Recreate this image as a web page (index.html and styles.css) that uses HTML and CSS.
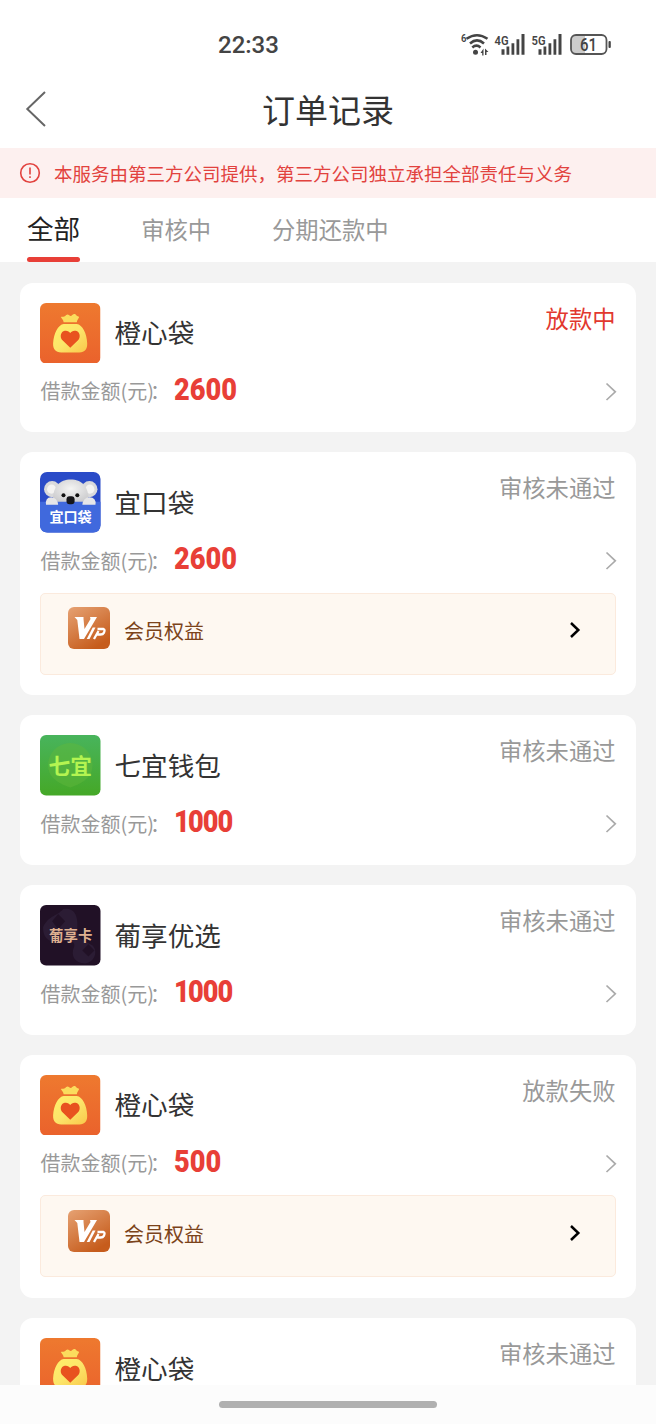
FILE: index.html
```html
<!DOCTYPE html>
<html lang="zh-CN">
<head>
  <meta charset="UTF-8">
  <meta name="viewport" content="width=device-width, initial-scale=1.0">
  <title>订单记录</title>
  <link rel="stylesheet" href="styles.css">
</head>
<body>
<!-- shared icons -->
<svg class="defs" width="0" height="0">
  <defs>
    <linearGradient id="orange" x1="0" y1="0" x2="0" y2="1">
      <stop offset="0" stop-color="#ee792f"/>
      <stop offset="1" stop-color="#ea622c"/>
    </linearGradient>
    <linearGradient id="gold" x1="0" y1="0" x2="1" y2="1">
      <stop offset="0" stop-color="#fff06a"/>
      <stop offset=".5" stop-color="#fce56a"/>
      <stop offset="1" stop-color="#f9c84a"/>
    </linearGradient>
    <linearGradient id="copper" x1="0" y1="0" x2=".6" y2="1">
      <stop offset="0" stop-color="#e6a273"/>
      <stop offset="1" stop-color="#c65c1c"/>
    </linearGradient>
    <linearGradient id="green" x1="0" y1="0" x2="0" y2="1">
      <stop offset="0" stop-color="#48b45c"/>
      <stop offset="1" stop-color="#45a827"/>
    </linearGradient>
    <radialGradient id="fur" cx=".5" cy=".4" r=".65">
      <stop offset="0" stop-color="#f4f4f3"/>
      <stop offset="1" stop-color="#cbcbcd"/>
    </radialGradient>
  </defs>
  <symbol id="bag" viewBox="0 0 60 60">
    <rect width="60" height="60" rx="6" fill="url(#orange)"/>
    <path d="M23.500 19C23 16.500 21 15 20.600 14C22 13 23.500 14.200 25 13C26 11.500 27.500 10.600 29 12.200C30 13.400 31 13.200 32 12C33.500 10.400 35.500 10.800 36.200 12.500C37 13.400 38 13 38.800 14C38.500 15.600 36.800 16.500 36.500 19Z" fill="#fbdc5d"/>
    <path d="M23.500 20.800H36.500C42 21.500 46.500 30 46.800 40C47 46 44.500 49 39 49H21C15.500 49 12.800 46 13 40C13.500 30 18 21.500 23.500 20.800Z" fill="url(#gold)"/>
    <path d="M30 44.500L21.800 36.500C19.500 33.500 20.500 28.500 24.500 27.600C27 27.100 29 28.300 30 29.800C31 28.300 33 27.100 35.500 27.600C39.500 28.500 40.500 33.500 38.200 36.500Z" fill="#e8521f"/>
  </symbol>
  <symbol id="vip" viewBox="0 0 42 42">
    <rect width="42" height="42" rx="6" fill="url(#copper)"/>
    <path d="M6.500 10H15.500V12L16.500 22L22.500 12L22 10H29L16 32H11.500L9.300 13Z" fill="#fff"/>
    <path d="M24.700 20.500H27.500L21.500 32H18.700Z" fill="#fff"/>
    <path d="M29.500 22H35.500Q37.300 22.600 36 25.600Q35 27.500 32.500 27.500H28M30.500 24L26 32" fill="none" stroke="#fff" stroke-width="2.300"/>
  </symbol>
  <symbol id="arrow" viewBox="0 0 12 20">
    <path d="M1.500 1.500L10.300 9.800L1.500 18" fill="none" stroke="currentColor" stroke-width="1.700"/>
  </symbol>
  <symbol id="arrow-bold" viewBox="0 0 12 18">
    <path d="M2 2L9.300 9L2 16" fill="none" stroke="currentColor" stroke-width="2.500"/>
  </symbol>
</svg>

<div class="page">
  <div class="status-bar">
    <div class="time">22:33</div>
    <svg class="signals" width="154" height="26" viewBox="0 0 154 26">
      <g fill="#444" font-family="Roboto, sans-serif" font-weight="600">
        <text x="1" y="10.700" font-size="11.500" textLength="5.500" lengthAdjust="spacingAndGlyphs">6</text>
        <text x="34.500" y="13.500" font-size="13.500" textLength="14" lengthAdjust="spacingAndGlyphs">4G</text>
        <text x="71.500" y="13.500" font-size="13.500" textLength="14" lengthAdjust="spacingAndGlyphs">5G</text>
      </g>
      <g fill="none" stroke="#444" stroke-width="2.500">
        <path d="M6.500 7.800Q17 .500 27.500 7.800"/>
        <path d="M10 12.500Q17 6.300 24 12.500"/>
        <path d="M12.300 16.500Q16.500 12.800 20.500 16.500"/>
      </g>
      <g fill="#444">
        <circle cx="15.500" cy="21.300" r="2.500"/>
        <path d="M23.500 17.500V24.500H22.200V22H20.500ZM25 17.500L28.500 21H26.500V24H25Z"/>
        <path d="M41.500 18.300h3v5.500h-3zM46.500 15.500h2.800v8.300h-2.800zM51.500 12.300h2.800v11.500h-2.800zM56.500 8.300h2.800v15.500h-2.800zM61.500 3h3v20.800h-3z"/>
        <path d="M78.500 18.300h3v5.500h-3zM83.500 15.500h2.800v8.300h-2.800zM88.500 12.300h2.800v11.500h-2.800zM93.500 8.300h2.800v15.500h-2.800zM98.500 3h3v20.800h-3z"/>
        <rect x="148.500" y="10" width="2.300" height="7" rx="1"/>
      </g>
      <path d="M116 4H125V23H116Q111 23 111 18V9Q111 4 116 4Z" fill="#ccc"/>
      <rect x="111" y="4" width="35.500" height="19" rx="5" fill="none" stroke="#555" stroke-width="1.800"/>
      <text x="128.500" y="19.700" font-family="Roboto, sans-serif" font-size="17.500" font-weight="500" textLength="17" lengthAdjust="spacingAndGlyphs" text-anchor="middle" fill="#444">61</text>
    </svg>
  </div>

  <div class="header">
    <svg class="back" width="22" height="36" viewBox="0 0 22 36">
      <path d="M20 1L2.300 18L20 35" fill="none" stroke="#666" stroke-width="2"/>
    </svg>
    <h1>订单记录</h1>
  </div>

  <div class="notice">
    <svg width="22" height="22" viewBox="0 0 22 22">
      <circle cx="11" cy="11" r="9.300" fill="none" stroke="#e2423e" stroke-width="1.600"/>
      <path d="M11 5.500V12.500M11 14.300V16" stroke="#e2423e" stroke-width="1.600"/>
    </svg>
    <span>本服务由第三方公司提供，第三方公司独立承担全部责任与义务</span>
  </div>

  <div class="tabs">
    <div class="tab active">全部</div>
    <div class="tab">审核中</div>
    <div class="tab">分期还款中</div>
  </div>

  <div class="list">
    <div class="card">
      <div class="top">
        <svg class="logo"><use href="#bag"/></svg>
        <div class="name">橙心袋</div>
        <div class="state red">放款中</div>
      </div>
      <div class="row">
        <span class="label">借款金额(元)<i>：</i></span>
        <span class="amount">2600</span>
        <svg class="arrow"><use href="#arrow"/></svg>
      </div>
    </div>

    <div class="card">
      <div class="top">
        <svg class="logo" viewBox="0 0 60 60">
          <rect width="60" height="60" rx="7" fill="#2a4bc8"/>
          <circle cx="12" cy="17" r="8" fill="#d9d9db"/>
          <circle cx="49" cy="17" r="8" fill="#d9d9db"/>
          <circle cx="11.500" cy="17" r="4.500" fill="#f4f3f2"/>
          <circle cx="49.500" cy="17" r="4.500" fill="#f4f3f2"/>
          <path d="M13 30C12 14 20 7.500 30.500 7.500S49 14 48 30Z" fill="url(#fur)"/>
          <path d="M0 29.500H60V52Q60 60 52 60H8Q0 60 0 52Z" fill="#4069dd"/>
          <path d="M6 32.500Q5 25 11 25Q17 25 18 32.500ZM42 32.500Q43 25 49 25Q56 25 55 32.500Z" fill="#e6e6e8"/>
          <circle cx="23.300" cy="23" r="2" fill="#111"/>
          <circle cx="37" cy="23" r="2" fill="#111"/>
          <rect x="26.300" y="24" width="8" height="8" rx="3" fill="#16161a"/>
          <text x="30.300" y="50" class="logo-text" font-size="14" textLength="42" fill="#fff">宜口袋</text>
        </svg>
        <div class="name">宜口袋</div>
        <div class="state">审核未通过</div>
      </div>
      <div class="row">
        <span class="label">借款金额(元)<i>：</i></span>
        <span class="amount">2600</span>
        <svg class="arrow"><use href="#arrow"/></svg>
      </div>
      <div class="vip">
        <svg class="vip-icon"><use href="#vip"/></svg>
        <span class="vip-text">会员权益</span>
        <svg class="vip-arrow"><use href="#arrow-bold"/></svg>
      </div>
    </div>

    <div class="card">
      <div class="top">
        <svg class="logo" viewBox="0 0 60 60">
          <rect width="60" height="60" rx="6" fill="url(#green)"/>
          <path d="M30 8A22 22 0 0 1 52 30C52 42 42 48 30 52C18 48 8 42 8 30A22 22 0 0 1 30 8Z" fill="#62b83c" opacity=".45"/>
          <text x="30" y="38.500" class="logo-text" font-size="21.500" textLength="43" fill="#b4f451">七宜</text>
        </svg>
        <div class="name">七宜钱包</div>
        <div class="state">审核未通过</div>
      </div>
      <div class="row">
        <span class="label">借款金额(元)<i>：</i></span>
        <span class="amount one">1000</span>
        <svg class="arrow"><use href="#arrow"/></svg>
      </div>
    </div>

    <div class="card">
      <div class="top">
        <svg class="logo" viewBox="0 0 60 60">
          <rect width="60" height="60" rx="6" fill="#211126"/>
          <path d="M23 4C35 2 38 12 37 24C36 34 46 36 52 40C58 46 54 57 45 58C34 58 30 50 34 41C35 34 26 36 20 36C8 38 3 32 3 22C9 10 16 12 23 4Z" fill="#2b1c34"/>
          <path d="M12 16L18 9L25 16L18 24ZM42 45L48 39L54 45L48 51Z" fill="#211126"/>
          <text x="30.500" y="35.800" class="logo-text" font-size="14.300" textLength="43" fill="#dfb090">葡享卡</text>
        </svg>
        <div class="name">葡享优选</div>
        <div class="state">审核未通过</div>
      </div>
      <div class="row">
        <span class="label">借款金额(元)<i>：</i></span>
        <span class="amount one">1000</span>
        <svg class="arrow"><use href="#arrow"/></svg>
      </div>
    </div>

    <div class="card">
      <div class="top">
        <svg class="logo"><use href="#bag"/></svg>
        <div class="name">橙心袋</div>
        <div class="state">放款失败</div>
      </div>
      <div class="row">
        <span class="label">借款金额(元)<i>：</i></span>
        <span class="amount">500</span>
        <svg class="arrow"><use href="#arrow"/></svg>
      </div>
      <div class="vip">
        <svg class="vip-icon"><use href="#vip"/></svg>
        <span class="vip-text">会员权益</span>
        <svg class="vip-arrow"><use href="#arrow-bold"/></svg>
      </div>
    </div>

    <div class="card">
      <div class="top">
        <svg class="logo"><use href="#bag"/></svg>
        <div class="name">橙心袋</div>
        <div class="state">审核未通过</div>
      </div>
    </div>
  </div>

  <div class="home-bar"><i></i></div>
</div>
</body>
</html>
```
FILE: styles.css
```css
:root {
  --red:#e83f37;
  --gray:#999;
}

* {
  box-sizing:border-box;
}

body {
  margin:0;
  background:#fff;
  font-family:"Noto Sans CJK SC", sans-serif;
  color:#333;
}

svg {
  display:block;
  flex-shrink:0;
}

.defs {
  position:absolute;
}

.page {
  width:656px;
  height:1424px;
  display:flex;
  flex-direction:column;
  overflow:hidden;
}

.status-bar {
  height:72px;
  padding:16px 42px 0 218px;
  display:flex;
  align-items:center;
  justify-content:space-between;
  flex-shrink:0;
}
.time {
  padding-top:2px;
  font-family:Roboto, sans-serif;
  font-size:24px;
  font-weight:500;
  color:#444;
}

.header {
  height:75.500px;
  padding:0 25px;
  display:grid;
  grid-template-columns:22px 1fr 22px;
  align-items:center;
  flex-shrink:0;
}
.header h1 {
  margin:0;
  padding-bottom:2px;
  font-size:33px;
  font-weight:400;
  line-height:40px;
  text-align:center;
}
.back {
  margin-bottom:2px;
}

.notice {
  height:50.500px;
  padding-left:19px;
  display:flex;
  align-items:center;
  gap:13px;
  background:#fdf0ef;
  color:#e2423e;
  font-size:18.500px;
  white-space:nowrap;
  flex-shrink:0;
}

.tabs {
  height:64px;
  padding-left:27px;
  display:flex;
  gap:61px;
  flex-shrink:0;
}
.tab {
  font-size:23.300px;
  line-height:63px;
  color:var(--gray);
}
.tab.active {
  display:flex;
  flex-direction:column;
  font-size:26.600px;
  line-height:59px;
  color:#222;
}
.tab.active:after {
  content:'';
  height:5px;
  border-radius:2.500px;
  background:var(--red);
}

.list {
  flex:1;
  min-height:0;
  padding:20.500px 20px 0;
  background:#f3f3f3;
  overflow:hidden;
}

.card {
  height:149.600px;
  margin-bottom:20px;
  padding:20px 20.500px;
  background:#fff;
  border-radius:13px;
}
.card:has(.vip) {
  height:243.400px;
}

.top {
  display:flex;
  height:60.500px;
  align-items:center;
}
.logo {
  width:60.500px;
  height:60.500px;
  margin-left:-.500px;
}
.logo-text {
  font-family:"Noto Sans CJK SC", sans-serif;
  font-weight:700;
  text-anchor:middle;
}
.name {
  margin-left:14px;
  padding-bottom:1px;
  font-size:26.600px;
  line-height:40px;
}
.state {
  margin-left:auto;
  align-self:flex-start;
  font-size:23.300px;
  line-height:30px;
  color:var(--gray);
}
.state.red {
  color:#e2382f;
}

.row {
  display:flex;
  align-items:center;
  height:41px;
  margin-top:8px;
}
.label {
  width:133px;
  padding-bottom:1.500px;
  font-size:20px;
  color:var(--gray);
  white-space:nowrap;
}
.label i {
  margin-left:-4px;
  font-style:normal;
}
.amount {
  font-family:Roboto, sans-serif;
  font-size:32px;
  font-weight:900;
  line-height:36px;
  padding-bottom:6px;
  color:var(--red);
  transform:scaleX(.85);
  transform-origin:left;
}
.amount.one:first-letter {
  letter-spacing:-2px;
}
.amount.one {
  letter-spacing:-1.300px;
}
.arrow {
  width:12px;
  height:20px;
  margin:0 -1px 0 auto;
  color:#aaa;
}

.vip {
  display:flex;
  height:82px;
  margin:11px 0 0 -.500px;
  padding:13.500px 34px 0 27px;
  background:#fef8f1;
  border:1px solid #fbeadd;
  border-radius:5px;
}
.vip-icon {
  width:42px;
  height:42px;
}
.vip-text {
  margin-left:14px;
  font-size:20px;
  line-height:48px;
  color:#7b431a;
}
.vip-arrow {
  width:12px;
  height:18px;
  margin:14px 0 0 auto;
  color:#000;
}

.home-bar {
  height:39px;
  display:flex;
  align-items:center;
  justify-content:center;
  background:#fcfcfc;
  flex-shrink:0;
}
.home-bar i {
  width:218px;
  height:7px;
  border-radius:4px;
  background:#b0b0b0;
}
```
